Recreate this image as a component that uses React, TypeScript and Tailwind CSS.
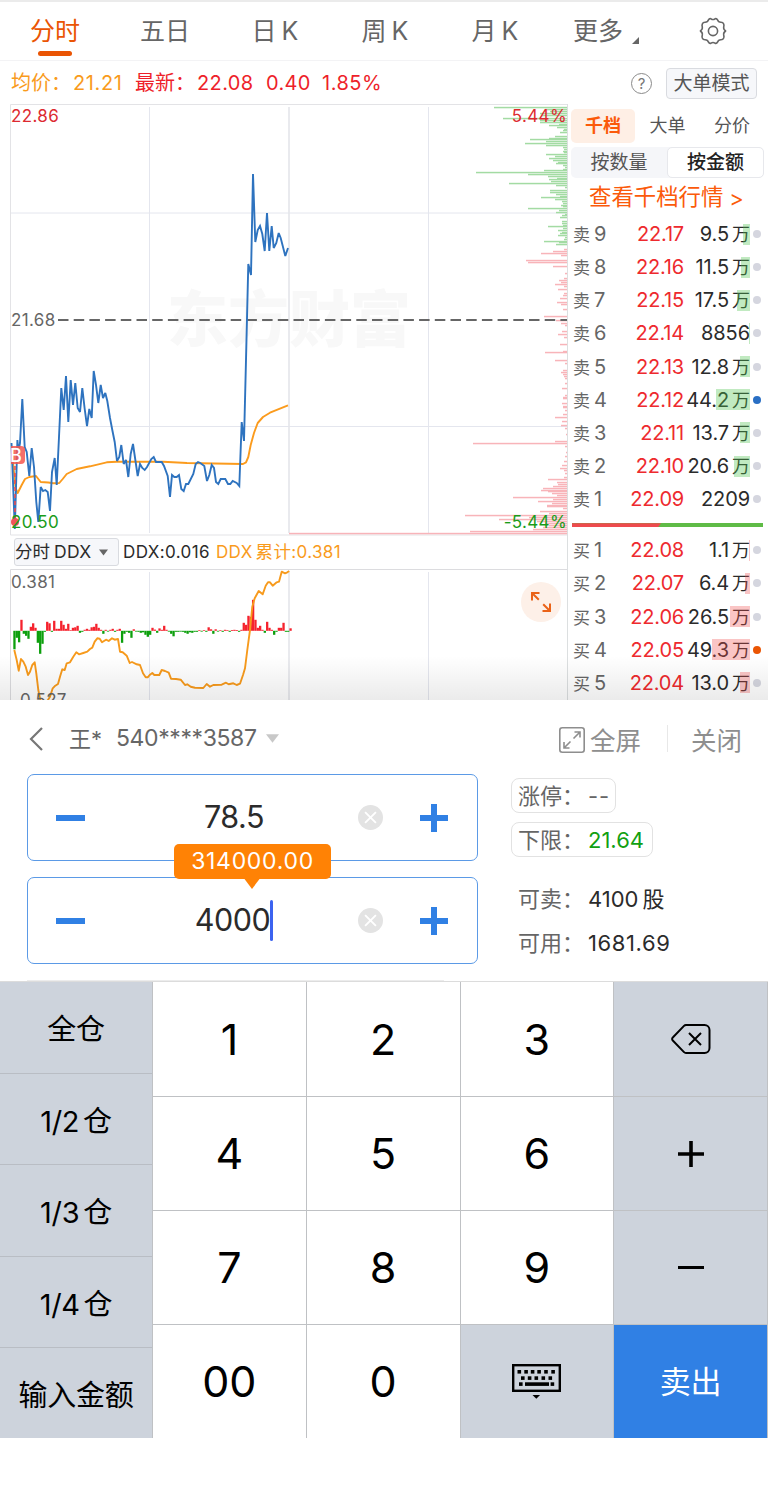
import type { ReactNode } from "react";

type Level = { label: string; price: string; vol: string; unit?: string; bar: number; dot?: string };

const TABS = ["分时", "五日", "日 K", "周 K", "月 K"];

const ASKS: Level[] = [
  { label: "9", price: "22.17", vol: "9.5", unit: "万", bar: 7 },
  { label: "8", price: "22.16", vol: "11.5", unit: "万", bar: 9 },
  { label: "7", price: "22.15", vol: "17.5", unit: "万", bar: 13 },
  { label: "6", price: "22.14", vol: "8856", bar: 1 },
  { label: "5", price: "22.13", vol: "12.8", unit: "万", bar: 10 },
  { label: "4", price: "22.12", vol: "44.2", unit: "万", bar: 34, dot: "bg-[#2a6fc4]" },
  { label: "3", price: "22.11", vol: "13.7", unit: "万", bar: 10 },
  { label: "2", price: "22.10", vol: "20.6", unit: "万", bar: 16 },
  { label: "1", price: "22.09", vol: "2209", bar: 0 },
];

const BIDS: Level[] = [
  { label: "1", price: "22.08", vol: "1.1", unit: "万", bar: 1 },
  { label: "2", price: "22.07", vol: "6.4", unit: "万", bar: 5 },
  { label: "3", price: "22.06", vol: "26.5", unit: "万", bar: 20 },
  { label: "4", price: "22.05", vol: "49.3", unit: "万", bar: 38, dot: "bg-[#ea5504]" },
  { label: "5", price: "22.04", vol: "13.0", unit: "万", bar: 10 },
];

const PRICE =
  "11.5,443 14.8,529 17.4,440 18.5,452 20,443 22.3,399 24.7,447 26.7,452 29.3,476 31.7,448 34,467 36.3,502 38.3,522 40.7,487 43,491 45.3,490 47.7,492 50,511 52,472 54.7,458 56.7,485 59,437 61.3,388 63.7,410 66,376 68.3,422 70.7,380 73,405 75.3,383 77.7,408 80,412 82.3,388 84.7,409 87,426 89.3,409 91.7,418 93.7,371 96,385 98.3,403 100.7,385 103,398 105.3,393 107.3,401 110,418 112.3,430 114.7,442 117,461 119.3,457 121.3,445 123.7,464 126,460 128.3,477 130.7,454 133,444 137.7,476 140,464 142.3,468 144.7,470 147,467 151.3,459 153.7,457 156,462 161.7,462 164,466 167.7,476 170,497 172,475 174.3,477 176.7,477 179,475 181.3,489 183.7,491 186,484 188.3,484 193.3,474 195.7,464 198,462 200.3,463 204.3,466 207,481 209.3,475 211.7,465 214,468 216,482 218.3,484 220.7,479 225.3,479 228,484 230.3,484 232.7,481 236.7,483 239.3,486 241.7,422 244,441 246,360 248.3,264 251,275 253,174 255.3,242 257.7,230 260,226 262.3,234 264.7,251 267,213 269.3,251 271.7,226 273.7,248 276.3,243 278.7,233 280.7,238 285.3,256 288,248";

const AVG =
  "12,450 13.5,467 15.5,488 17.7,493 21.7,485 25,479 29.3,477 36,476 40.7,482 48.3,482.5 53.3,483.3 59.3,483 62.7,479 66.7,474 76.7,469 90,466.3 106.7,462.3 116.7,461.7 163,461.7 187,463 243,464 246,462.3 248.3,457 250.7,445 254,433 257.7,423 263,417 270,412.7 288,405.3";

// [y, width] of each price level, measured back from the right edge
const SELL_DEPTH = [
  [107, 73], [109, 22], [111, 17], [113, 27], [115, 25], [118, 64], [120, 27], [122, 27], [124, 8], [125, 18], [127, 10], [129, 3], [130, 4], [132, 7], [136, 12], [138, 18], [139, 37], [141, 21], [143, 42], [145, 21], [147, 4], [149, 3], [151, 4], [152, 3], [154, 21], [156, 12], [158, 18], [160, 14], [162, 9], [163, 11], [165, 4], [167, 2], [169, 4], [170, 23], [172, 91], [174, 39], [176, 19], [178, 10], [179, 18], [181, 16], [183, 58], [185, 11], [187, 2], [190, 17], [192, 17], [194, 11], [196, 7], [197, 26], [199, 12], [201, 5], [203, 4], [205, 6], [206, 4], [208, 39], [210, 8], [212, 11], [214, 2], [215, 5], [217, 7], [221, 5], [223, 5], [225, 4], [226, 19], [228, 4], [230, 9], [232, 5], [233, 7], [235, 9], [237, 2], [239, 3], [241, 23], [242, 8], [244, 11],
];
const BUY_DEPTH = [
  [249, 3], [251, 14], [253, 26], [255, 6], [260, 41], [262, 39], [266, 14], [273, 2], [278, 3], [280, 8], [282, 6], [284, 12], [286, 3], [289, 9], [293, 3], [295, 4], [298, 7], [302, 10], [304, 6], [309, 4], [316, 23], [320, 11], [323, 6], [325, 2], [331, 5], [334, 9], [337, 3], [344, 7], [351, 4], [352, 22], [360, 12], [363, 2], [370, 4], [372, 6], [374, 4], [376, 3], [378, 2], [383, 2], [388, 5], [395, 2], [397, 4], [398, 4], [403, 5], [406, 4], [407, 4], [410, 2], [414, 4], [417, 12], [421, 5], [425, 6], [428, 2], [434, 1], [441, 12], [443, 94], [446, 2], [452, 1], [456, 2], [461, 3], [465, 5], [468, 7], [470, 3], [473, 2], [477, 3], [479, 19], [482, 10], [484, 9], [486, 14], [488, 24], [490, 26], [491, 19], [493, 15], [495, 10], [497, 54], [499, 14], [501, 29], [503, 15], [505, 20], [506, 20], [508, 4], [511, 27], [513, 18], [515, 102], [517, 38], [519, 68], [521, 30], [523, 22], [525, 18], [527, 24], [529, 34], [531, 97], [533, 278],
];

const DDX = [
  -18.5, -7, -11.5, 11, -3, -5, -8, 4, 7.5, 3, -12, -23, -13, -1, 9, 7.5, -1, 10, 2, 2, 10, 6, 2, 7, 0.7, 3, 3.5, 5, -2, -1, 1, 2, 1, 3.5, 4, 7, 3, 1, -3, 1, -0.8, 1, 2, -1, 1, 2, -12, -3, -1, -2, -7, 1.5, -0.8, -1, -2, -1.5, -4, -6, -4, 3, 1.2, -2, 2.4, 1, 5, 1, -0.8, -3, -5.5, -1, -1, -0.8, -1, -2, -3, -1.5, -2, -1, -1, 0.7, -0.8, 0.7, -1, 3.5, 1.5, -3, 1.5, -0.8, 0.7, -1, 1, 0.7, -1, 0.8, 1, 0.8, -1, 1, 8, 6, 15, 14, 31, 11, 3, 5, 1, -2, 9, 3, 1, -4, -1, 3, 3, 8, -1, -1, 2.5,
];

const DDX_TOTAL =
  "14.3,650 16.7,660 18.7,670.7 21,659 23.3,661.7 25.7,666.7 28,675 30,671.7 32.3,665 34.7,662.3 36.3,673.3 38.3,690 40.7,702 46.7,702 50,696.7 52.7,688.3 55.3,685.7 58,684 60,676.7 62.3,669.3 64.7,670 66.7,663.3 70,662.3 73.3,656.7 76.3,652.3 79,654.3 83.3,653 87.3,651.7 90,649 92.3,647.7 94.7,641.7 97.3,638.3 99.7,638.7 102,642.3 106,639.7 108.7,641 112,638.3 114.7,639.7 118,639 120,651.7 122.7,652.3 126.7,655.7 129.7,663 132,662 136.7,664.3 140,665 143,673.3 145.7,677.3 147.7,677.3 150,674.7 152.3,673 154.3,675 159.3,675 161.7,670 165,671 168.7,672.7 171,678.7 176,679 180.7,679.7 185,685 187.3,684.3 190.7,686.7 195,687.7 203.3,688 206.7,684 210,686.7 213.3,685 221.7,684.7 226,682.7 228.7,684.3 233.3,683.3 236.7,685 240,683.7 243,675 245,668.3 247.3,650 250,630 252.3,606.7 254.7,598.3 258.7,591 262.7,594.3 265.7,585.7 268,582.3 270,582.3 272.7,585.7 276.7,582.3 279,581.7 281.7,571.7 285,573.3 287.3,572.3 289.3,571";

function Triangle({ className }: { className: string }) {
  return (
    <svg viewBox="0 0 12 8" className={className} fill="currentColor">
      <path d="M0 0h12L6 8z" />
    </svg>
  );
}

function LevelRow({ side, level }: { side: "卖" | "买"; level: Level }) {
  return (
    <div className="flex h-[33.15px] items-center pl-[5px] text-[20px] leading-none">
      <span className="flex w-[44px] items-baseline gap-[4px] text-[#666]">
        <span className="text-[17px]">{side}</span>
        <span>{level.label}</span>
      </span>
      <span className="w-[67px] text-right tracking-[-0.2px] text-[#ee2a2e]">{level.price}</span>
      <span className="relative flex h-[21px] w-[66px] items-center justify-end text-[#2b2b2b]">
        <span className="flex items-baseline whitespace-nowrap tracking-[-0.1px]">
          {level.vol}
          {level.unit && <span className="ml-[3px] text-[18px] tracking-normal">{level.unit}</span>}
        </span>
        <span
          className={`absolute inset-y-0 right-0 ${side === "卖" ? "bg-[#4cc24c]/35" : "bg-[#f04a4a]/32"}`}
          style={{ width: level.bar }}
        />
      </span>
      <span className={`ml-[3px] size-[8px] rounded-full ${level.dot ?? "bg-[#d5d6df]"}`} />
    </div>
  );
}

function Stepper({ children }: { children: ReactNode }) {
  return (
    <div className="relative flex h-[87px] w-[451px] items-center rounded-[7px] border border-[#5b9ae6]">
      <span className="ml-[28px] h-[6px] w-[29px] bg-[#3080e4]" />
      <div className="ml-[60px] flex w-[178px] items-center justify-center text-[30.5px] leading-none tracking-[-0.5px] text-[#2b2b2b]">
        {children}
      </div>
      <svg viewBox="0 0 24 24" className="ml-[35px] size-[25px]">
        <circle cx="12" cy="12" r="12" fill="#e3e3e3" />
        <path d="M6.8 6.8l10.4 10.4M17.2 6.8L6.8 17.2" stroke="#fff" strokeWidth="1.8" />
      </svg>
      <svg viewBox="0 0 28 28" className="ml-[37px] size-[28px]" stroke="#3080e4" strokeWidth="6">
        <path d="M0 14h28M14 0v28" />
      </svg>
    </div>
  );
}

function Key({ children, className = "bg-white" }: { children: ReactNode; className?: string }) {
  return (
    <div className={`flex items-center justify-center border-r border-b border-[#bfc1c4] text-[43px] leading-none text-black ${className}`}>
      {children}
    </div>
  );
}

function PriceChart() {
  return (
    <div className="relative h-[432px]">
      <svg viewBox="0 104 568 432" width="568" height="432" className="block" fill="none">
        <text x="289" y="342" textAnchor="middle" fontSize="61" fontWeight="900" fill="#f8f8f8" fontFamily="Noto Sans CJK SC">
          东方财富
        </text>
        <path d="M149.5 107v426M428.5 107v426M11 213h556M11 426.500h556" stroke="#e4e6ee" />
        <path d="M289 107v426" stroke="#e4e5ea" strokeWidth="1.6" />
        <path d="M10.500 535V104.500H568M10.500 535H568" stroke="#e3e3e6" />
        {SELL_DEPTH.map(([y, w]) => (
          <rect key={y} x={567 - w} y={y - 0.2} width={w} height="1.5" fill="#a3dba3" />
        ))}
        {BUY_DEPTH.map(([y, w]) => (
          <rect key={y} x={567 - w} y={y - 0.2} width={w} height="1.5" fill="#f8b4b9" />
        ))}
        <path d="M58 320H567" stroke="#666" strokeWidth="1.8" strokeDasharray="10.5 5.2" />
        <polyline points={AVG} stroke="#fb9b1d" strokeWidth="1.9" strokeLinejoin="round" />
        <polyline points={PRICE} stroke="#2e73bf" strokeWidth="1.9" strokeLinejoin="miter" strokeMiterlimit="3" />
        <path d="M15 466v52" stroke="#ee4a4a" strokeWidth="1.5" strokeDasharray="4 3" />
        <circle cx="15" cy="522" r="4" fill="#f0525a" />
        <path d="M11 446h10a4 4 0 0 1 4 4v10a4 4 0 0 1-4 4H11z" fill="#f4564f" fillOpacity=".85" />
        <text x="10" y="461.500" fontSize="18" fontWeight="500" fill="#fff">B</text>
        <path d="M567.500 104V536" stroke="#dcdfe0" />
      </svg>
      <div className="pointer-events-none absolute inset-0 text-[17px] leading-none tracking-[0.35px]">
        <span className="absolute left-[11px] top-[4px] text-[#dd2a30]">22.86</span>
        <span className="absolute right-[1px] top-[4px] text-[#dd2a30]">5.44%</span>
        <span className="absolute left-[11px] top-[208px] text-[#666]">21.68</span>
        <span className="absolute left-[11px] top-[410px] text-[#1a9c1a]">20.50</span>
        <span className="absolute right-[1px] top-[410px] text-[#1a9c1a]">-5.44%</span>
      </div>
    </div>
  );
}

function DdxChart() {
  return (
    <div className="relative h-[132px] overflow-hidden">
      <svg viewBox="0 568 568 132" width="568" height="132" className="block" fill="none">
        <path d="M149.500 572v130M428.500 572v130" stroke="#e4e6ee" />
        <path d="M289 572v130" stroke="#e4e5ea" strokeWidth="1.6" />
        <path d="M10.500 702V569.500H568" stroke="#dcdcdf" />
        <path d="M567.500 568v132" stroke="#dcdfe0" />
        {DDX.map((v, i) => (
          <rect
            key={i}
            x={13.3 + i * 2.34}
            y={v > 0 ? 630.8 - v : 630.8}
            width="2.3"
            height={Math.abs(v)}
            fill={v > 0 ? "#f5222d" : "#0c9f0c"}
          />
        ))}
        <polyline points={DDX_TOTAL} stroke="#f79a1c" strokeWidth="1.9" strokeLinejoin="round" />
      </svg>
      <span className="absolute left-[11px] top-[6px] text-[17px] leading-none tracking-[0.3px] text-[#666]">0.381</span>
      <span className="absolute left-[20px] top-[124px] text-[17px] leading-none tracking-[0.3px] text-[#666]">0.527</span>
      <span className="absolute left-[521px] top-[14px] flex size-[40px] items-center justify-center rounded-full bg-[#fdf0e8]">
        <svg viewBox="0 0 20 20" className="size-[20px]" fill="none" stroke="#ea6318" strokeWidth="2">
          <path d="M8.500 1H1v7.500M1 1l6.800 6.800M11.500 19H19v-7.500M19 19l-6.800-6.800" />
        </svg>
      </span>
    </div>
  );
}

export default function App() {
  return (
    <main className="h-[1494px] w-[768px] overflow-hidden bg-white font-['Inter','Noto_Sans_CJK_SC',sans-serif]">
      {/* Period tabs */}
      <nav className="flex h-[61px] border-t-2 border-b border-t-[#ebebeb] border-b-[#f3f3f5] text-[25px] leading-none text-[#666]">
        {TABS.map((t, i) => (
          <div
            key={t}
            className={`relative flex w-[110px] items-center justify-center ${i === 0 ? "text-[#ea5504]" : ""}`}
          >
            <span className="[word-spacing:-2px]">{t}</span>
            {i === 0 && <span className="absolute bottom-[4px] left-[38px] h-[5px] w-[34px] rounded-full bg-[#ea5504]" />}
          </div>
        ))}
        <div className="flex w-[108px] items-center pl-[23px]">
          更多
          <svg viewBox="0 0 7 7" className="mt-[18px] ml-[9px] size-[7px]" fill="#666">
            <path d="M7 0v7H0z" />
          </svg>
        </div>
        <div className="flex w-[110px] items-center justify-center">
          <svg viewBox="0 0 28 28" className="size-[28px]" fill="none" stroke="#666" strokeWidth="1.6" strokeLinejoin="round">
            <path d="M9.500 2.800Q10.300 1.200 12 1.800Q14 3.200 16 1.800Q17.700 1.200 18.500 2.800Q19.300 5.300 22 5.200Q24 5.200 24.700 7Q25.200 8.600 24.700 10Q24.300 12.500 26.600 14Q24.300 15.500 24.700 18Q25.200 19.400 24.700 21Q24 22.800 22 22.800Q19.300 22.700 18.500 25.200Q17.700 26.800 16 26.200Q14 24.800 12 26.200Q10.300 26.800 9.500 25.200Q8.700 22.700 6 22.800Q4 22.800 3.300 21Q2.800 19.400 3.300 18Q3.700 15.500 1.400 14Q3.700 12.500 3.300 10Q2.800 8.600 3.300 7Q4 5.200 6 5.200Q8.700 5.300 9.500 2.800Z" />
            <circle cx="14" cy="14" r="4.600" />
          </svg>
        </div>
      </nav>

      {/* Quote summary */}
      <div className="flex h-[43px] items-center pt-px pl-[11px] text-[20px] leading-none text-[#ee1f2a]">
        <span className="w-[62px] text-[#f99b1c]">均价：</span>
        <span className="w-[62px] tracking-[0.6px] text-[#f99b1c]">21.21</span>
        <span className="w-[62px]">最新：</span>
        <span className="w-[69px] tracking-[0.4px]">22.08</span>
        <span className="w-[56px] tracking-[0.3px]">0.40</span>
        <span className="tracking-[0.5px]">1.85%</span>
        <span className="mr-[14px] ml-auto flex size-[21px] items-center justify-center rounded-full border border-[#8a8a8a] text-[15px] text-[#777]">
          ?
        </span>
        <span className="mr-[11px] flex h-[31px] w-[91px] items-center justify-center rounded-[4px] border border-[#d9dbe0] bg-[#f6f7fa] text-[19px] text-[#555]">
          大单模式
        </span>
      </div>

      <section className="relative flex h-[596px]">
        <div className="w-[568px]">
          <PriceChart />
          <div className="flex h-[32px] items-center border-r border-[#dcdfe0] pl-[14px] text-[16px] leading-none">
            <span className="flex h-[28px] w-[105px] items-center rounded-[3px] border border-[#d9dbe0] bg-[#f6f7fa] text-[#2b2b2b]">
              <span className="text-[17.5px]">分时</span>
              <span className="ml-[4px] text-[17.5px] tracking-[0.3px]">DDX</span>
              <Triangle className="ml-[7px] h-[7px] w-[9px] text-[#666]" />
            </span>
            <span className="ml-[4px] w-[93px] text-[17px] tracking-[0.4px] text-[#2b2b2b]">DDX:0.016</span>
            <span className="flex items-baseline text-[17px] tracking-[0.35px] text-[#f99b1c]">
              DDX<span className="ml-[3px] text-[17.5px]">累计</span>:0.381
            </span>
          </div>
          <DdxChart />
        </div>

        {/* Order book */}
        <aside className="w-[200px]">
          <div className="mt-[5px] ml-[3px] flex h-[34px] w-[193px] items-center text-[18px] leading-none text-[#555]">
            <span className="flex h-full w-[64px] items-center justify-center rounded-[5px] bg-[#feefe5] font-bold text-[#fb5a0a]">
              千档
            </span>
            <span className="w-[65px] text-center">大单</span>
            <span className="w-[64px] text-center">分价</span>
          </div>
          <div className="mt-[4px] ml-[3px] flex h-[31px] w-[193px] items-center rounded-[5px] bg-[#f5f6f9] text-[19px] leading-none text-[#555]">
            <span className="w-[96px] text-center">按数量</span>
            <span className="flex h-full w-[97px] items-center justify-center rounded-[5px] border border-[#e7e8ec] bg-white font-medium text-[#222]">
              按金额
            </span>
          </div>
          <div className="mb-[0.5px] flex h-[39px] items-center pl-[21px] text-[22.400px] leading-none text-[#fb5a0a]">
            查看千档行情<span className="ml-[6px] text-[22px]">&gt;</span>
          </div>
          {ASKS.map((l) => (
            <LevelRow key={l.label} side="卖" level={l} />
          ))}
          <div className="mt-[7.5px] mb-[6.5px] ml-[4px] flex h-[4px] w-[191px] bg-[#5fbb46]">
            <span className="w-[89px] bg-[#ee4a4e] [clip-path:polygon(0_0,100%_0,calc(100%-3px)_100%,0_100%)]" />
          </div>
          {BIDS.map((l) => (
            <LevelRow key={l.label} side="买" level={l} />
          ))}
        </aside>
        <div className="pointer-events-none absolute inset-x-0 bottom-0 h-[44px] bg-linear-to-b from-transparent to-black/8" />
      </section>

      {/* Order ticket */}
      <section className="relative h-[281px] bg-white">
        <header className="flex h-[74px] items-center pt-[3px] pl-[29px] leading-none text-[#666]">
          <svg viewBox="0 0 14 24" className="h-[24px] w-[14px]" fill="none" stroke="#777" strokeWidth="2.200">
            <path d="M13 1L2 12l11 11" />
          </svg>
          <span className="ml-[26px] text-[22px]">王*</span>
          <span className="ml-[14px] text-[23px] tracking-[-0.4px]">540****3587</span>
          <Triangle className="ml-[9px] h-[9px] w-[13px] text-[#c8c8c8]" />
          <svg viewBox="0 0 26 26" className="mt-[3px] mr-[5px] ml-auto size-[26px]" fill="none" stroke="#8e8e8e" strokeWidth="1.6">
            <rect x="0.800" y="0.800" width="24.400" height="24.400" rx="2.500" />
            <path d="M15.500 5H21v5.500M21 5l-6.500 6.500M5 15v6h5.500M5 21l6.500-6.500" />
          </svg>
          <span className="mt-[4px] text-[25.500px] text-[#8e8e8e]">全屏</span>
          <span className="mr-[23px] ml-[26px] h-[27px] w-px bg-[#e8e8e8]" />
          <span className="mt-[4px] mr-[26px] text-[25.500px] text-[#8e8e8e]">关闭</span>
        </header>
        <div className="flex">
          <div className="relative ml-[27px] flex flex-col gap-[16px]">
            <Stepper>78.5</Stepper>
            <Stepper>
              4000
              <span className="h-[41px] w-[3px] rounded-full bg-[#3c63f0]" />
            </Stepper>
            <div className="absolute left-[147px] top-[70px] flex h-[35px] w-[157px] items-center justify-center rounded-[5px] bg-[#ff8205] text-[23px] leading-none tracking-[0.7px] text-white">
              314000.00
              <Triangle className="absolute top-[34px] left-[67px] h-[11px] w-[22px] text-[#ff8205]" />
            </div>
          </div>
          <div className="ml-[33px] flex flex-col items-start text-[22px] leading-none text-[#666]">
            <div className="mt-[4px] flex h-[35px] w-[105px] items-center rounded-[8px] border border-[#e2e2e2] pl-[6px]">
              <span className="w-[70px]">涨停：</span>
              <span className="tracking-[1px]">--</span>
            </div>
            <div className="mt-[9px] flex h-[35px] w-[142px] items-center rounded-[8px] border border-[#e2e2e2] pl-[6px]">
              <span className="w-[70px]">下限：</span>
              <span className="text-[#12a012]">21.64</span>
            </div>
            <div className="mt-[31px] flex pl-[7px]">
              <span className="w-[70px]">可卖：</span>
              <span className="text-[#2b2b2b]">4100</span>
              <span className="ml-[4px] text-[#2b2b2b]">股</span>
            </div>
            <div className="mt-[22px] flex pl-[7px]">
              <span className="w-[70px]">可用：</span>
              <span className="tracking-[0.6px] text-[#2b2b2b]">1681.69</span>
            </div>
          </div>
        </div>
        <div className="absolute bottom-0 left-[27px] h-px w-[417px] bg-[#ececec]" />
      </section>

      {/* Keypad */}
      <section className="flex h-[458px] border-t border-[#dcdcdc]">
        <div className="grid h-[456px] w-[153px] grid-rows-[92px_91px_92px_91px_90px] border-r border-[#bfc1c4] bg-[#cdd3dc] text-[29px] leading-none text-black">
          {["全仓", "1/2 仓", "1/3 仓", "1/4 仓", "输入金额"].map((t, i) => (
            <div
              key={t}
              className={`flex items-center justify-center pt-[4px] tracking-[-0.3px] [word-spacing:-4px] ${i < 4 ? "border-b border-[#b9bdc4]" : ""}`}
            >
              {t}
            </div>
          ))}
        </div>
        <div className="grid h-[456px] w-[615px] grid-cols-4 grid-rows-[115px_114px_114px_113px]">
          <Key>1</Key>
          <Key>2</Key>
          <Key>3</Key>
          <Key className="bg-[#cdd3dc]">
            <svg viewBox="0 0 40 30" className="h-[30px] w-[40px]" fill="none" stroke="#000" strokeWidth="2">
              <path d="M15 1h18.500a5 5 0 0 1 5 5v18a5 5 0 0 1-5 5H15a3 3 0 0 1-2-.9L1.800 16.500a2 2 0 0 1 0-3L13 1.900A3 3 0 0 1 15 1z" />
              <path d="M18 9l12 12M30 9L18 21" />
            </svg>
          </Key>
          <Key>4</Key>
          <Key>5</Key>
          <Key>6</Key>
          <Key className="bg-[#cdd3dc]">
            <svg viewBox="0 0 26 26" className="size-[26px]" stroke="#000" strokeWidth="3.600">
              <path d="M0 13h26M13 0v26" />
            </svg>
          </Key>
          <Key>7</Key>
          <Key>8</Key>
          <Key>9</Key>
          <Key className="bg-[#cdd3dc]">
            <span className="h-[3px] w-[26px] bg-black" />
          </Key>
          <Key className="border-b-0 bg-white">00</Key>
          <Key className="border-b-0 bg-white">0</Key>
          <Key className="border-b-0 bg-[#cdd3dc]">
            <svg viewBox="0 0 49 36" className="h-[36px] w-[49px]" fill="#000">
              <rect x="1.200" y="1.200" width="46.600" height="25.600" fill="none" stroke="#000" strokeWidth="2.400" />
              {[5.500, 12.300, 18.800, 25.300, 32.200, 39.300].map((x) => (
                <rect key={x} x={x} y="6" width="3.600" height="3.600" />
              ))}
              {[9, 15.800, 22.500, 29.500, 36.500].map((x) => (
                <rect key={x} x={x} y="12.300" width="3.600" height="3.600" />
              ))}
              <rect x="7" y="18.300" width="3.600" height="3.600" />
              <rect x="13" y="18.300" width="24" height="3.600" />
              <rect x="38.600" y="18.300" width="3.600" height="3.600" />
              <path d="M20.500 31h7.600l-3.800 3.800z" />
            </svg>
          </Key>
          <Key className="border-b-0 bg-[#3080e4]">
            <span className="text-[31px] text-white">卖出</span>
          </Key>
        </div>
      </section>
    </main>
  );
}
